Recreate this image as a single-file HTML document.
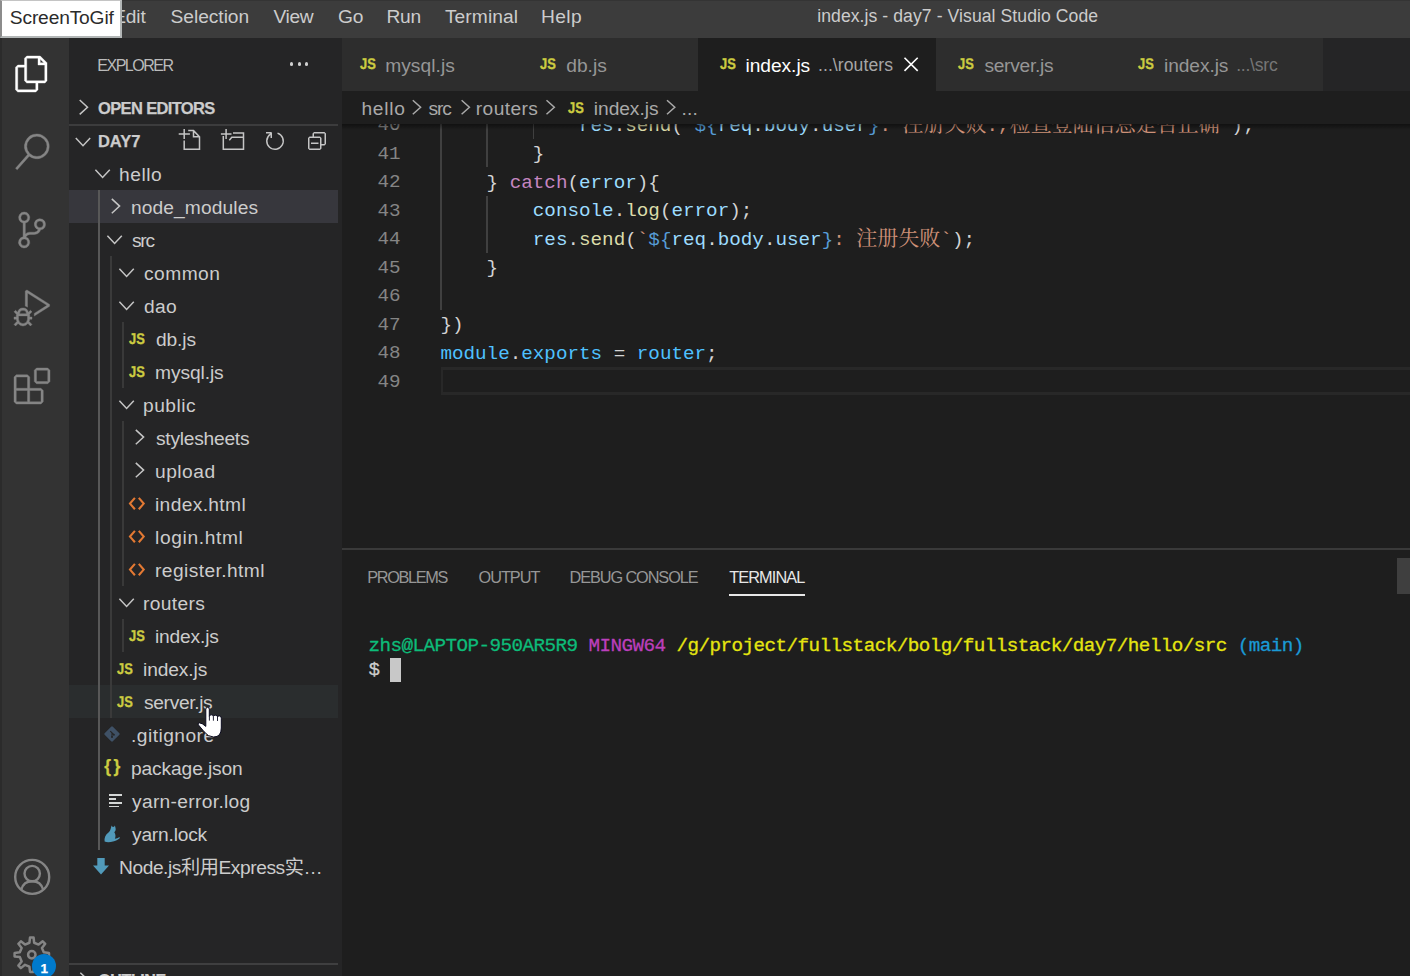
<!DOCTYPE html>
<html><head><meta charset="utf-8"><title>index.js - day7 - Visual Studio Code</title>
<style>
*{margin:0;padding:0;box-sizing:border-box}
html,body{width:1410px;height:976px;overflow:hidden;background:#1e1e1e}
body{position:relative;font-family:"Liberation Sans", "Noto Sans CJK SC", sans-serif;color:#cccccc;font-size:19px}
.abs{position:absolute}
.t{position:absolute;white-space:pre;line-height:1}
svg{position:absolute;overflow:visible}
#title{left:0;top:0;width:1410px;height:38px;background:#3c3c3c}
#act{left:0;top:38px;width:69px;height:938px;background:#333333}
#side{left:69px;top:38px;width:273px;height:938px;background:#252526}
#tabs{left:342px;top:38px;width:1068px;height:53px;background:#252526}
.tab{position:absolute;top:38px;height:53px;background:#2d2d2d}
.tab.on{background:#1e1e1e}
#crumbs{left:342px;top:91px;width:1068px;height:33px;background:#1e1e1e}
.row{position:absolute;left:69px;width:269px;height:33px}
.m{font-family:"Liberation Mono", "Noto Serif CJK SC", monospace}
.b{font-weight:bold;-webkit-text-stroke:0.25px}
</style></head><body>
<div id="title" class="abs"></div>
<div id="act" class="abs"></div>
<div id="side" class="abs"></div>
<div class="abs" style="left:0px;top:0px;width:1410px;height:1px;background:#343434;"></div>
<div id="t1" class="t" style="left:113.20px;top:6.7px;font-size:19.2px;color:#cccccc;letter-spacing:-0.177px;">Edit</div>
<div id="t2" class="t" style="left:170.60px;top:6.7px;font-size:19.2px;color:#cccccc;letter-spacing:-0.045px;">Selection</div>
<div id="t3" class="t" style="left:273.40px;top:6.7px;font-size:19.2px;color:#cccccc;letter-spacing:-0.328px;">View</div>
<div id="t4" class="t" style="left:337.90px;top:6.7px;font-size:19.2px;color:#cccccc;letter-spacing:-0.025px;">Go</div>
<div id="t5" class="t" style="left:386.40px;top:6.7px;font-size:19.2px;color:#cccccc;letter-spacing:-0.264px;">Run</div>
<div id="t6" class="t" style="left:444.90px;top:6.7px;font-size:19.2px;color:#cccccc;letter-spacing:0.094px;">Terminal</div>
<div id="t7" class="t" style="left:540.90px;top:6.7px;font-size:19.2px;color:#cccccc;letter-spacing:0.436px;">Help</div>
<div id="t8" class="t" style="left:817.20px;top:7.6px;font-size:17.6px;color:#cccccc;letter-spacing:0.071px;">index.js - day7 - Visual Studio Code</div>
<div class="abs" style="left:0px;top:0px;width:122px;height:38px;background:#ffffff;border-top:1px solid #c4c4c4;border-left:2px solid #8c8c8c;border-right:2px solid #b2b6b6;border-bottom:2px solid #b2b6b6;"></div>
<div id="t9" class="t" style="left:9.80px;top:8.3px;font-size:19.2px;color:#2b2b2b;letter-spacing:-0.155px;">ScreenToGif</div>
<div class="abs" style="left:0px;top:38px;width:2px;height:938px;background:#2b2b2b;"></div>
<svg style="left:13.6px;top:56px" width="36" height="36" viewBox="0 0 24 24"><path fill="#ffffff" stroke="#ffffff" stroke-width="0.25" fill-rule="evenodd" clip-rule="evenodd" d="M17.5 0h-9L7 1.5V6H2.5L1 7.500v15.070L2.500 24h12.070L16 22.570V18h4.700l1.300-1.430V4.500L17.500 0zm0 2.120l2.380 2.380H17.500V2.120zm-3 20.380h-12v-15H7v9.070L8.500 18h6v4.500zm6-6h-12v-15H16V6h4.500v10.500z"/></svg>
<svg style="left:14px;top:134px" width="36" height="36" viewBox="0 0 24 24"><path fill="#858585" stroke="#858585" stroke-width="0.25" fill-rule="evenodd" clip-rule="evenodd" d="M15.250 0a8.250 8.250 0 0 0-6.180 13.720L1 22.880l1.120 1 8.050-9.120A8.251 8.251 0 1 0 15.250.010V0zm0 15a6.750 6.750 0 1 1 0-13.500 6.750 6.750 0 0 1 0 13.500z"/></svg>
<svg style="left:14px;top:212px" width="36" height="36" viewBox="0 0 24 24"><path fill="#858585" stroke="#858585" stroke-width="0.25" fill-rule="evenodd" clip-rule="evenodd" d="M21.007 8.222A3.738 3.738 0 0 0 15.045 5.200a3.737 3.737 0 0 0 1.156 6.583 2.988 2.988 0 0 1-2.668 1.670h-2.990a4.456 4.456 0 0 0-2.989 1.165V7.400a3.737 3.737 0 1 0-1.494 0v9.117a3.776 3.776 0 1 0 1.816.099 2.990 2.990 0 0 1 2.668-1.667h2.990a4.484 4.484 0 0 0 4.223-3.039 3.736 3.736 0 0 0 3.250-3.687zM4.565 3.738a2.242 2.242 0 1 1 4.484 0 2.242 2.242 0 0 1-4.484 0zm4.484 16.441a2.242 2.242 0 1 1-4.484 0 2.242 2.242 0 0 1 4.484 0zm8.221-9.715a2.242 2.242 0 1 1 0-4.485 2.242 2.242 0 0 1 0 4.485z"/></svg>
<svg style="left:13.5px;top:290px" width="36" height="36" viewBox="0 0 24 24"><path fill="#858585" stroke="#858585" stroke-width="0.25" fill-rule="evenodd" clip-rule="evenodd" d="M10.940 13.500l-1.320 1.320a3.730 3.730 0 0 0-7.240 0L1.060 13.500 0 14.560l1.720 1.720-.220.220V18H0v1.500h1.500v.080c.077.489.214.966.410 1.420L0 22.940 1.060 24l1.650-1.650A4.308 4.308 0 0 0 6 24a4.310 4.310 0 0 0 3.290-1.650L10.940 24 12 22.940 10.090 21c.198-.464.336-.951.410-1.450v-.100H12V18h-1.500v-1.500l-.220-.220L12 14.560l-1.060-1.060zM6 13.500a2.250 2.250 0 0 1 2.250 2.250h-4.500A2.250 2.250 0 0 1 6 13.500zm3 6a3.330 3.330 0 0 1-3 3 3.330 3.330 0 0 1-3-3v-2.250h6v2.250zm14.760-9.900v1.260L13.500 17.370V15.600l8.500-5.370L9 2v9.460a5.070 5.070 0 0 0-1.500-.720V.630L8.640 0l15.120 9.600z"/></svg>
<svg style="left:13.8px;top:368px" width="36" height="36" viewBox="0 0 24 24"><path fill="#858585" stroke="#858585" stroke-width="0.25" fill-rule="evenodd" clip-rule="evenodd" d="M13.500 1.500L15 0h7.500L24 1.500V9l-1.500 1.500H15L13.500 9V1.500zm1.500 0V9h7.500V1.500H15zM0 15V6l1.500-1.500H9L10.500 6v7.500H18l1.500 1.500v7.500L18 24H1.500L0 22.500V15zm9-1.500V6H1.500v7.500H9zM9 15H1.500v7.500H9V15zm1.500 7.500H18V15h-7.500v7.500z"/></svg>
<svg style="left:12px;top:857px" width="40" height="40" viewBox="0 0 40 40" fill="none" stroke="#858585" stroke-width="2.4"><circle cx="20.2" cy="19.9" r="17"/><circle cx="20.2" cy="16.6" r="7.7"/><path d="M9.3 32.5c1.5-5.5 5.800-8.300 10.900-8.300s9.400 2.800 10.900 8.300"/></svg>
<svg style="left:0;top:0" width="70" height="976" fill="none" stroke="#858585" stroke-width="2.5" stroke-linejoin="round"><path d="M29.42 942.73 L30.04 937.49 L33.56 937.49 L34.18 942.73 L38.58 944.56 L42.72 941.28 L45.22 943.78 L41.94 947.92 L43.77 952.32 L49.01 952.94 L49.01 956.46 L43.77 957.08 L41.94 961.48 L45.22 965.62 L42.72 968.12 L38.58 964.84 L34.18 966.67 L33.56 971.91 L30.04 971.91 L29.42 966.67 L25.02 964.84 L20.88 968.12 L18.38 965.62 L21.66 961.48 L19.83 957.08 L14.59 956.46 L14.59 952.94 L19.83 952.32 L21.66 947.92 L18.38 943.78 L20.88 941.28 L25.02 944.56Z"/><circle cx="31.8" cy="954.7" r="3.7"/></svg>
<div class="abs" style="left:32px;top:954.4px;width:24px;height:24px;border-radius:12px;background:#007acc"></div>
<div id="t10" class="t b" style="left:40.60px;top:961.8px;font-size:13.5px;color:#ffffff;">1</div>
<div id="t11" class="t" style="left:97.30px;top:58.1px;font-size:16px;color:#bbbbbb;letter-spacing:-1.484px;">EXPLORER</div>
<div class="abs" style="left:289.79999999999995px;top:62.4px;width:3.2px;height:3.2px;border-radius:2px;background:#d0d0d0"></div>
<div class="abs" style="left:297.5px;top:62.4px;width:3.2px;height:3.2px;border-radius:2px;background:#d0d0d0"></div>
<div class="abs" style="left:305.2px;top:62.4px;width:3.2px;height:3.2px;border-radius:2px;background:#d0d0d0"></div>
<svg style="left:0;top:0" width="1410" height="976"><path d="M79.7 100.0L87.5 107.2L79.7 114.4" fill="none" stroke="#c5c5c5" stroke-width="1.5"/></svg>
<div id="t12" class="t b" style="left:98.10px;top:100.0px;font-size:16.5px;color:#cccccc;letter-spacing:-0.662px;">OPEN EDITORS</div>
<div class="abs" style="left:69px;top:124px;width:269px;height:2px;background:#3c3c3d;"></div>
<svg style="left:0;top:0" width="1410" height="976"><path d="M75.8 137.9L83.0 145.7L90.2 137.9" fill="none" stroke="#c5c5c5" stroke-width="1.5"/></svg>
<div id="t13" class="t b" style="left:97.90px;top:132.9px;font-size:16.5px;color:#cccccc;letter-spacing:-0.007px;">DAY7</div>
<svg style="left:0;top:0" width="1410" height="976" fill="none" stroke="#c5c5c5" stroke-width="1.5"><path d="M178.700 133.900H189.900M184.200 129.100V139.100M184.200 140.400V149.300H199.500V136.700L193.500 130.600H188.200M193.500 130.600V136.700H199.500"/><path d="M220.900 133.900H231.500M226.100 129.100V139.100M223.300 136V149.300H243.500V133H233M229.300 140.200L231.800 137.300H243.500"/></svg>
<svg style="left:262.7px;top:128.9px" width="24" height="24" viewBox="0 0 16 16"><path fill="#c5c5c5" fill-rule="evenodd" clip-rule="evenodd" d="M4.681 3H2V2h3.500l.500.500V6H5V4a5 5 0 1 0 4.530-.761l.302-.954A6 6 0 1 1 4.681 3z"/></svg>
<svg style="left:305px;top:129.400px" width="24" height="24" viewBox="0 0 16 16"><path fill="#c5c5c5" d="M9 9H4v1h5V9z"/><path fill="#c5c5c5" fill-rule="evenodd" clip-rule="evenodd" d="M5 3l1-1h7l1 1v7l-1 1h-2v2l-1 1H3l-1-1V6l1-1h2V3zm1 2h4l1 1v4h2V3H6v2zm4 1H3v7h7V6z"/></svg>
<div class="abs" style="left:69px;top:190px;width:269px;height:33px;background:#37373d;"></div>
<div class="abs" style="left:69px;top:685px;width:269px;height:33px;background:#2a2d2e;"></div>
<div class="abs" style="left:98px;top:190px;width:2px;height:660px;background:#585858;"></div>
<div class="abs" style="left:110px;top:256px;width:1.5px;height:462px;background:#3a3a3a;"></div>
<div class="abs" style="left:122.1px;top:322px;width:1.5px;height:66px;background:#393939;"></div>
<div class="abs" style="left:122.1px;top:421px;width:1.5px;height:165px;background:#393939;"></div>
<div class="abs" style="left:122.1px;top:619px;width:1.5px;height:33px;background:#393939;"></div>
<svg style="left:0;top:0" width="1410" height="976"><path d="M95.4 169.7L102.6 177.5L109.8 169.7" fill="none" stroke="#c5c5c5" stroke-width="1.5"/></svg>
<div id="t14" class="t" style="left:119.00px;top:164.7px;font-size:19.2px;color:#cccccc;letter-spacing:0.533px;">hello</div>
<svg style="left:0;top:0" width="1410" height="976"><path d="M111.8 198.9L119.6 206.1L111.8 213.3" fill="none" stroke="#c5c5c5" stroke-width="1.5"/></svg>
<div id="t15" class="t" style="left:131.00px;top:197.7px;font-size:19.2px;color:#cccccc;letter-spacing:0.101px;">node_modules</div>
<svg style="left:0;top:0" width="1410" height="976"><path d="M107.4 235.7L114.6 243.5L121.8 235.7" fill="none" stroke="#c5c5c5" stroke-width="1.5"/></svg>
<div id="t16" class="t" style="left:132.00px;top:230.7px;font-size:19.2px;color:#cccccc;letter-spacing:-1.292px;">src</div>
<svg style="left:0;top:0" width="1410" height="976"><path d="M119.4 268.7L126.6 276.5L133.8 268.7" fill="none" stroke="#c5c5c5" stroke-width="1.5"/></svg>
<div id="t17" class="t" style="left:144.00px;top:263.7px;font-size:19.2px;color:#cccccc;letter-spacing:0.459px;">common</div>
<svg style="left:0;top:0" width="1410" height="976"><path d="M119.4 301.7L126.6 309.5L133.8 301.7" fill="none" stroke="#c5c5c5" stroke-width="1.5"/></svg>
<div id="t18" class="t" style="left:144.00px;top:296.7px;font-size:19.2px;color:#cccccc;letter-spacing:0.329px;">dao</div>
<div id="t19" class="t b" style="left:129.00px;top:332.1px;font-size:15.5px;color:#cbcb41;transform:scale(0.8324,1);transform-origin:0 13.1px;text-rendering:geometricPrecision;-webkit-text-stroke:0.35px;">JS</div>
<div id="t20" class="t" style="left:156.00px;top:329.7px;font-size:19.2px;color:#cccccc;letter-spacing:-0.134px;">db.js</div>
<div id="t21" class="t b" style="left:129.00px;top:365.1px;font-size:15.5px;color:#cbcb41;transform:scale(0.8324,1);transform-origin:0 13.1px;text-rendering:geometricPrecision;-webkit-text-stroke:0.35px;">JS</div>
<div id="t22" class="t" style="left:155.00px;top:362.7px;font-size:19.2px;color:#cccccc;letter-spacing:-0.086px;">mysql.js</div>
<svg style="left:0;top:0" width="1410" height="976"><path d="M119.4 400.7L126.6 408.5L133.8 400.7" fill="none" stroke="#c5c5c5" stroke-width="1.5"/></svg>
<div id="t23" class="t" style="left:143.00px;top:395.7px;font-size:19.2px;color:#cccccc;letter-spacing:0.492px;">public</div>
<svg style="left:0;top:0" width="1410" height="976"><path d="M135.8 429.9L143.6 437.1L135.8 444.3" fill="none" stroke="#c5c5c5" stroke-width="1.5"/></svg>
<div id="t24" class="t" style="left:156.00px;top:428.7px;font-size:19.2px;color:#cccccc;letter-spacing:-0.249px;">stylesheets</div>
<svg style="left:0;top:0" width="1410" height="976"><path d="M135.8 462.9L143.6 470.1L135.8 477.3" fill="none" stroke="#c5c5c5" stroke-width="1.5"/></svg>
<div id="t25" class="t" style="left:155.00px;top:461.7px;font-size:19.2px;color:#cccccc;letter-spacing:0.490px;">upload</div>
<svg style="left:0;top:0" width="1410" height="976"><path d="M134.9 497.9L130.0 503.6L134.9 509.3M138.8 497.9L143.7 503.6L138.8 509.3" fill="none" stroke="#e37933" stroke-width="2.1"/></svg>
<div id="t26" class="t" style="left:155.00px;top:494.7px;font-size:19.2px;color:#cccccc;letter-spacing:0.357px;">index.html</div>
<svg style="left:0;top:0" width="1410" height="976"><path d="M134.9 530.9L130.0 536.6L134.9 542.3M138.8 530.9L143.7 536.6L138.8 542.3" fill="none" stroke="#e37933" stroke-width="2.1"/></svg>
<div id="t27" class="t" style="left:155.00px;top:527.7px;font-size:19.2px;color:#cccccc;letter-spacing:0.627px;">login.html</div>
<svg style="left:0;top:0" width="1410" height="976"><path d="M134.9 563.9L130.0 569.6L134.9 575.3M138.8 563.9L143.7 569.6L138.8 575.3" fill="none" stroke="#e37933" stroke-width="2.1"/></svg>
<div id="t28" class="t" style="left:155.00px;top:560.7px;font-size:19.2px;color:#cccccc;letter-spacing:0.414px;">register.html</div>
<svg style="left:0;top:0" width="1410" height="976"><path d="M119.4 598.7L126.6 606.5L133.8 598.7" fill="none" stroke="#c5c5c5" stroke-width="1.5"/></svg>
<div id="t29" class="t" style="left:143.00px;top:593.7px;font-size:19.2px;color:#cccccc;letter-spacing:0.346px;">routers</div>
<div id="t30" class="t b" style="left:129.00px;top:629.1px;font-size:15.5px;color:#cbcb41;transform:scale(0.8324,1);transform-origin:0 13.1px;text-rendering:geometricPrecision;-webkit-text-stroke:0.35px;">JS</div>
<div id="t31" class="t" style="left:155.00px;top:626.7px;font-size:19.2px;color:#cccccc;letter-spacing:-0.166px;">index.js</div>
<div id="t32" class="t b" style="left:117.00px;top:662.1px;font-size:15.5px;color:#cbcb41;transform:scale(0.8324,1);transform-origin:0 13.1px;text-rendering:geometricPrecision;-webkit-text-stroke:0.35px;">JS</div>
<div id="t33" class="t" style="left:143.00px;top:659.7px;font-size:19.2px;color:#cccccc;letter-spacing:-0.109px;">index.js</div>
<div id="t34" class="t b" style="left:117.00px;top:695.1px;font-size:15.5px;color:#cbcb41;transform:scale(0.8324,1);transform-origin:0 13.1px;text-rendering:geometricPrecision;-webkit-text-stroke:0.35px;">JS</div>
<div id="t35" class="t" style="left:144.00px;top:692.7px;font-size:19.2px;color:#cccccc;letter-spacing:-0.343px;">server.js</div>
<svg style="left:104.2px;top:726.0999999999999px" width="16" height="16" viewBox="0 0 16 16"><rect x="2.2" y="2.2" width="11.6" height="11.6" rx="1.2" transform="rotate(45 8 8)" fill="#3f5166"/><path d="M6.3 5.200l3.300 3.300M8 6.900v4" stroke="#252526" stroke-width="1.100" fill="none"/><circle cx="8" cy="11" r="1" fill="#252526"/><circle cx="9.900" cy="8.700" r="1" fill="#252526"/></svg>
<div id="t36" class="t" style="left:131.00px;top:725.7px;font-size:19.2px;color:#cccccc;letter-spacing:0.460px;">.gitignore</div>
<div id="t37" class="t b" style="left:104.30px;top:758.0px;font-size:17.5px;color:#cbcb41;letter-spacing:-1.286px;">{ }</div>
<div id="t38" class="t" style="left:131.00px;top:758.7px;font-size:19.2px;color:#cccccc;letter-spacing:-0.118px;">package.json</div>
<div class="abs" style="left:109.2px;top:794.2px;width:12.7px;height:1.8px;background:#d4d7d6;"></div>
<div class="abs" style="left:109.2px;top:798.0px;width:7.3px;height:1.8px;background:#d4d7d6;"></div>
<div class="abs" style="left:109.2px;top:801.8px;width:12.7px;height:1.8px;background:#d4d7d6;"></div>
<div class="abs" style="left:109.2px;top:805.6px;width:10px;height:1.8px;background:#d4d7d6;"></div>
<div id="t39" class="t" style="left:132.00px;top:791.7px;font-size:19.2px;color:#cccccc;letter-spacing:0.321px;">yarn-error.log</div>
<svg style="left:104.4px;top:824.5px" width="16" height="18" viewBox="0 0 16 18"><path d="M7.600 0.500L8.700 2.100L10.100 1.700L10.900 0.400L11.600 3.200C12 5 11.100 6.500 10.300 7.200C11.600 9 11.900 11.500 10.900 13.700C12.500 13.700 14 13 15.300 12.100L15.900 13C14 14.900 11.500 16 9 16.600C6 17.600 2.500 17.600 0.600 16.600C0 13 1.500 9.500 4.500 7.500C5.500 6.500 6.300 5.500 6.600 4Z" fill="#519aba"/></svg>
<div id="t40" class="t" style="left:132.00px;top:824.7px;font-size:19.2px;color:#cccccc;letter-spacing:-0.198px;">yarn.lock</div>
<svg style="left:93px;top:858.1999999999999px" width="16" height="17" viewBox="0 0 16 17"><path d="M4.300 0h7.400v7.400H16L8 16.500 0 7.400h4.300z" fill="#519aba"/></svg>
<div id="t41" class="t" style="left:119.00px;top:857.7px;font-size:19.2px;color:#cccccc;letter-spacing:-0.437px;">Node.js利用Express实…</div>
<div class="abs" style="left:69px;top:963px;width:269px;height:1.5px;background:#3f3f40;"></div>
<svg style="left:0;top:0" width="1410" height="976"><path d="M80.3 972.8L88.1 980.0L80.3 987.2" fill="none" stroke="#c5c5c5" stroke-width="1.5"/></svg>
<div id="t42" class="t b" style="left:98.30px;top:972.5px;font-size:16px;color:#cccccc;letter-spacing:-0.391px;">OUTLINE</div>
<div class="abs" style="left:441px;top:367px;width:969px;height:28px;border:3px solid #282828;border-right:none;border-left-width:2px"></div>
<div class="abs" style="left:440.2px;top:110.3px;width:1.5px;height:199.5px;background:#404040;"></div>
<div class="abs" style="left:486.4px;top:110.3px;width:1.5px;height:57.0px;background:#404040;"></div>
<div class="abs" style="left:486.4px;top:195.8px;width:1.5px;height:57.0px;background:#404040;"></div>
<div class="abs" style="left:532.6px;top:110.3px;width:1.5px;height:28.5px;background:#404040;"></div>
<div id="t43" class="t m" style="left:377.40px;top:116.0px;font-size:19.25px;color:#858585;">40</div>
<div id="t44" class="t m" style="left:377.40px;top:144.5px;font-size:19.25px;color:#858585;">41</div>
<div id="t45" class="t m" style="left:377.40px;top:173.0px;font-size:19.25px;color:#858585;">42</div>
<div id="t46" class="t m" style="left:377.40px;top:201.5px;font-size:19.25px;color:#858585;">43</div>
<div id="t47" class="t m" style="left:377.40px;top:230.0px;font-size:19.25px;color:#858585;">44</div>
<div id="t48" class="t m" style="left:377.40px;top:258.5px;font-size:19.25px;color:#858585;">45</div>
<div id="t49" class="t m" style="left:377.40px;top:287.0px;font-size:19.25px;color:#858585;">46</div>
<div id="t50" class="t m" style="left:377.40px;top:315.5px;font-size:19.25px;color:#858585;">47</div>
<div id="t51" class="t m" style="left:377.40px;top:344.0px;font-size:19.25px;color:#858585;">48</div>
<div id="t52" class="t m" style="left:377.40px;top:372.5px;font-size:19.25px;color:#858585;">49</div>
<div class="t m" style="left:579.00px;top:111.6px;height:28.5px;line-height:28.5px;font-size:19.25px;letter-spacing:0;overflow:hidden"><span style="color:#9cdcfe">res</span><span style="color:#d4d4d4">.</span><span style="color:#dcdcaa">send</span><span style="color:#d4d4d4">(</span><span style="color:#ce9178">`</span><span style="color:#569cd6">${</span><span style="color:#9cdcfe">req</span><span style="color:#d4d4d4">.</span><span style="color:#9cdcfe">body</span><span style="color:#d4d4d4">.</span><span style="color:#9cdcfe">user</span><span style="color:#569cd6">}</span><span style="color:#ce9178">: </span><span style="color:#ce9178;font-family:'Noto Serif CJK SC',serif;font-size:21px;letter-spacing:0;display:inline-block;line-height:0;vertical-align:baseline">注册失败</span><span style="color:#ce9178">.,</span><span style="color:#ce9178;font-family:'Noto Serif CJK SC',serif;font-size:21px;letter-spacing:0;display:inline-block;line-height:0;vertical-align:baseline">检查登陆信息是否正确</span><span style="color:#ce9178">`</span><span style="color:#d4d4d4">);</span></div>
<div class="t m" style="left:532.80px;top:140.1px;height:28.5px;line-height:28.5px;font-size:19.25px;letter-spacing:0;overflow:hidden"><span style="color:#d4d4d4">}</span></div>
<div class="t m" style="left:486.60px;top:168.6px;height:28.5px;line-height:28.5px;font-size:19.25px;letter-spacing:0;overflow:hidden"><span style="color:#d4d4d4">} </span><span style="color:#c586c0">catch</span><span style="color:#d4d4d4">(</span><span style="color:#9cdcfe">error</span><span style="color:#d4d4d4">){</span></div>
<div class="t m" style="left:532.80px;top:197.1px;height:28.5px;line-height:28.5px;font-size:19.25px;letter-spacing:0;overflow:hidden"><span style="color:#9cdcfe">console</span><span style="color:#d4d4d4">.</span><span style="color:#dcdcaa">log</span><span style="color:#d4d4d4">(</span><span style="color:#9cdcfe">error</span><span style="color:#d4d4d4">);</span></div>
<div class="t m" style="left:532.80px;top:225.6px;height:28.5px;line-height:28.5px;font-size:19.25px;letter-spacing:0;overflow:hidden"><span style="color:#9cdcfe">res</span><span style="color:#d4d4d4">.</span><span style="color:#dcdcaa">send</span><span style="color:#d4d4d4">(</span><span style="color:#ce9178">`</span><span style="color:#569cd6">${</span><span style="color:#9cdcfe">req</span><span style="color:#d4d4d4">.</span><span style="color:#9cdcfe">body</span><span style="color:#d4d4d4">.</span><span style="color:#9cdcfe">user</span><span style="color:#569cd6">}</span><span style="color:#ce9178">: </span><span style="color:#ce9178;font-family:'Noto Serif CJK SC',serif;font-size:21px;letter-spacing:0;display:inline-block;line-height:0;vertical-align:baseline">注册失败</span><span style="color:#ce9178">`</span><span style="color:#d4d4d4">);</span></div>
<div class="t m" style="left:486.60px;top:254.1px;height:28.5px;line-height:28.5px;font-size:19.25px;letter-spacing:0;overflow:hidden"><span style="color:#d4d4d4">}</span></div>
<div class="t m" style="left:440.40px;top:311.1px;height:28.5px;line-height:28.5px;font-size:19.25px;letter-spacing:0;overflow:hidden"><span style="color:#d4d4d4">})</span></div>
<div class="t m" style="left:440.40px;top:339.6px;height:28.5px;line-height:28.5px;font-size:19.25px;letter-spacing:0;overflow:hidden"><span style="color:#4fc1ff">module</span><span style="color:#d4d4d4">.</span><span style="color:#4fc1ff">exports</span><span style="color:#d4d4d4"> = </span><span style="color:#4fc1ff">router</span><span style="color:#d4d4d4">;</span></div>
<div id="tabs" class="abs"></div>
<div class="tab" style="left:342px;width:176px"></div>
<div class="tab" style="left:518px;width:180px"></div>
<div class="tab on" style="left:698px;width:238px"></div>
<div class="tab" style="left:936px;width:180px"></div>
<div class="tab" style="left:1116px;width:207px"></div>
<div id="t53" class="t b" style="left:359.60px;top:57.2px;font-size:15.5px;color:#cbcb41;transform:scale(0.8324,1);transform-origin:0 13.1px;text-rendering:geometricPrecision;-webkit-text-stroke:0.35px;">JS</div>
<div id="t54" class="t" style="left:385.20px;top:55.9px;font-size:19.2px;color:#969696;letter-spacing:0.043px;">mysql.js</div>
<div id="t55" class="t b" style="left:540.00px;top:57.2px;font-size:15.5px;color:#cbcb41;transform:scale(0.8324,1);transform-origin:0 13.1px;text-rendering:geometricPrecision;-webkit-text-stroke:0.35px;">JS</div>
<div id="t56" class="t" style="left:566.20px;top:55.9px;font-size:19.2px;color:#969696;letter-spacing:0.041px;">db.js</div>
<div id="t57" class="t b" style="left:719.90px;top:57.2px;font-size:15.5px;color:#cbcb41;transform:scale(0.8324,1);transform-origin:0 13.1px;text-rendering:geometricPrecision;-webkit-text-stroke:0.35px;">JS</div>
<div id="t58" class="t" style="left:745.50px;top:55.9px;font-size:19.2px;color:#ffffff;letter-spacing:-0.052px;">index.js</div>
<div id="t59" class="t" style="left:818.00px;top:57.3px;font-size:17.6px;color:#a6a6a6;letter-spacing:0.069px;">...\routers</div>
<svg style="left:0;top:0" width="1410" height="100"><path d="M904.5 57.700L917.700 70.900M917.700 57.700L904.500 70.900" stroke="#ffffff" stroke-width="1.600" fill="none"/></svg>
<div id="t60" class="t b" style="left:957.80px;top:57.2px;font-size:15.5px;color:#cbcb41;transform:scale(0.8324,1);transform-origin:0 13.1px;text-rendering:geometricPrecision;-webkit-text-stroke:0.35px;">JS</div>
<div id="t61" class="t" style="left:984.40px;top:55.9px;font-size:19.2px;color:#969696;letter-spacing:-0.280px;">server.js</div>
<div id="t62" class="t b" style="left:1138.00px;top:57.2px;font-size:15.5px;color:#cbcb41;transform:scale(0.8324,1);transform-origin:0 13.1px;text-rendering:geometricPrecision;-webkit-text-stroke:0.35px;">JS</div>
<div id="t63" class="t" style="left:1164.10px;top:55.9px;font-size:19.2px;color:#969696;letter-spacing:-0.109px;">index.js</div>
<div id="t64" class="t" style="left:1236.20px;top:57.3px;font-size:17.6px;color:#767676;letter-spacing:-0.251px;">...\src</div>
<div id="crumbs" class="abs"></div>
<div id="t65" class="t" style="left:361.40px;top:98.7px;font-size:19.2px;color:#a9a9a9;letter-spacing:0.758px;">hello</div>
<div id="t66" class="t" style="left:428.40px;top:98.7px;font-size:19.2px;color:#a9a9a9;letter-spacing:-1.042px;">src</div>
<div id="t67" class="t" style="left:475.80px;top:98.7px;font-size:19.2px;color:#a9a9a9;letter-spacing:0.396px;">routers</div>
<div id="t68" class="t b" style="left:568.20px;top:101.4px;font-size:15.5px;color:#cbcb41;transform:scale(0.8324,1);transform-origin:0 13.1px;text-rendering:geometricPrecision;-webkit-text-stroke:0.35px;">JS</div>
<div id="t69" class="t" style="left:593.80px;top:98.7px;font-size:19.2px;color:#a9a9a9;letter-spacing:-0.052px;">index.js</div>
<div id="t70" class="t" style="left:681.50px;top:98.7px;font-size:19.2px;color:#a9a9a9;letter-spacing:0.169px;">...</div>
<svg style="left:0;top:0" width="1410" height="976"><path d="M412.8 100.2L420.6 107.2L412.8 114.2" fill="none" stroke="#a9a9a9" stroke-width="1.5"/></svg>
<svg style="left:0;top:0" width="1410" height="976"><path d="M461.6 100.2L469.4 107.2L461.6 114.2" fill="none" stroke="#a9a9a9" stroke-width="1.5"/></svg>
<svg style="left:0;top:0" width="1410" height="976"><path d="M546.5 100.2L554.3 107.2L546.5 114.2" fill="none" stroke="#a9a9a9" stroke-width="1.5"/></svg>
<svg style="left:0;top:0" width="1410" height="976"><path d="M667.0 100.2L674.8 107.2L667.0 114.2" fill="none" stroke="#a9a9a9" stroke-width="1.5"/></svg>
<div class="abs" style="left:342px;top:124px;width:1068px;height:6px;background:linear-gradient(rgba(0,0,0,0.45),rgba(0,0,0,0))"></div>
<div class="abs" style="left:342px;top:548px;width:1068px;height:2px;background:#3a3a3a;"></div>
<div id="t71" class="t" style="left:367.30px;top:568.6px;font-size:16.3px;color:#979797;letter-spacing:-1.345px;">PROBLEMS</div>
<div id="t72" class="t" style="left:478.50px;top:568.6px;font-size:16.3px;color:#979797;letter-spacing:-1.017px;">OUTPUT</div>
<div id="t73" class="t" style="left:569.50px;top:568.6px;font-size:16.3px;color:#979797;letter-spacing:-1.082px;">DEBUG CONSOLE</div>
<div id="t74" class="t" style="left:729.20px;top:568.6px;font-size:16.3px;color:#e7e7e7;letter-spacing:-0.881px;">TERMINAL</div>
<div class="abs" style="left:729.3px;top:594.3px;width:75.8px;height:2px;background:#e7e7e7;"></div>
<div class="abs" style="left:1397px;top:558px;width:13px;height:36px;background:#3f3f3f;"></div>
<div class="t m" style="left:368.5px;top:636.6px;font-size:19.25px;letter-spacing:-0.550px;-webkit-text-stroke:0.3px"><span style="color:#0dbc79">zhs@LAPTOP-950AR5R9</span><span style="color:#ccc"> </span><span style="color:#bc3fbc">MINGW64</span><span style="color:#ccc"> </span><span style="color:#e5e510">/g/project/fullstack/bolg/fullstack/day7/hello/src</span><span style="color:#ccc"> </span><span style="color:#1a9ad6">(main)</span></div>
<div class="t m" style="left:368.5px;top:660.8px;font-size:19.25px;letter-spacing:-0.550px;-webkit-text-stroke:0.3px"><span style="color:#cccccc">$</span></div>
<div class="abs" style="left:389.8px;top:658.2px;width:11px;height:24px;background:#c8c8c8;"></div>
<svg style="left:0;top:0" width="1410" height="976"><path d="M205.800 709.200Q205.800 707.300 207.500 707.300Q209.300 707.300 209.300 709.200L209.300 716.200Q209.600 714.800 211.400 714.800Q213.200 714.800 213.400 716.300Q213.700 715.200 215.500 715.200Q217.300 715.200 217.500 716.800Q217.900 715.900 219.400 715.900Q221.300 716 221.300 718.200L221.300 728Q221.300 737 213.600 737Q208 737 204 731.600L198.400 724.900Q197.300 723.300 199.400 722.900Q202 722.800 205.800 726.400Z" fill="#ffffff" stroke="#0a0a1e" stroke-width="1"/><path d="M209.400 716v4.600M213.400 716.300v4.400M217.500 716.800v4.200" stroke="#0a0a1e" stroke-width="0.9" fill="none"/></svg>
</body></html>
